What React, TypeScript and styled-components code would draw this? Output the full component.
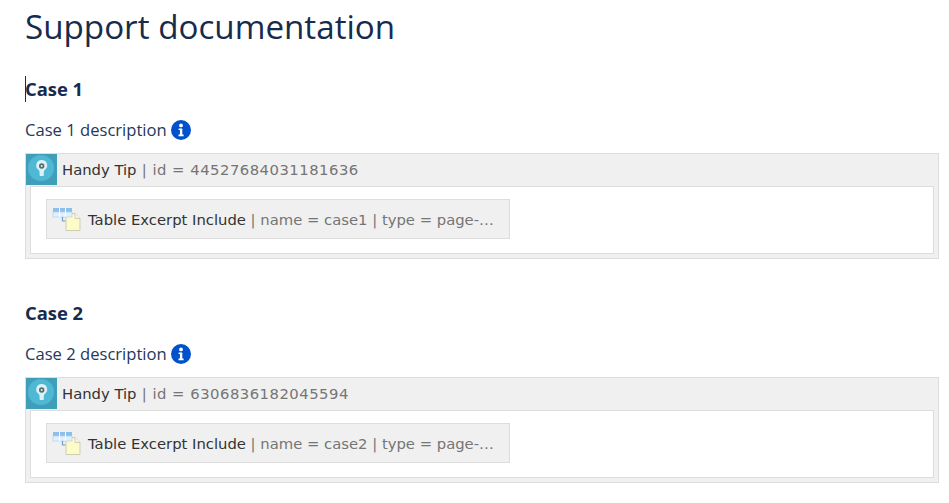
import React from 'react';
import styled, { createGlobalStyle } from 'styled-components';

const GlobalStyle = createGlobalStyle`
  html, body {
    margin: 0;
    background: #ffffff;
    overflow: hidden;
  }
  body {
    color: #172b4d;
    font-family: 'Open Sans', 'Noto Sans', sans-serif;
  }
`;

const Page = styled.div`
  width: 949px;
  height: 503px;
  box-sizing: border-box;
  padding: 6px 10px 0 25px;
  overflow: hidden;
`;

const Title = styled.h1`
  margin: 0;
  height: 42px;
  font-size: 33.2px;
  line-height: 42px;
  font-weight: 400;
  color: #172b4d;
`;

const CaseBlock = styled.section`
  padding-top: 29px;
  height: 195px;
`;

const CaseTitle = styled.h2`
  position: relative;
  margin: 0;
  height: 24px;
  font-size: 18.4px;
  line-height: 24px;
  font-weight: 700;
  color: #172b4d;
`;

const Caret = styled.span`
  position: absolute;
  left: 0;
  top: -1px;
  width: 1px;
  height: 26px;
  background: #172b4d;
`;

const Description = styled.p`
  display: flex;
  align-items: center;
  gap: 4px;
  margin: 17px 0 0;
  height: 24px;
  font-size: 16.6px;
  line-height: 24px;
  color: #253858;
`;

const Macro = styled.div`
  margin-top: 11px;
  box-sizing: border-box;
  height: 106px;
  border: 1px solid #dddddd;
  background: #f0f0f0;
  display: flex;
  flex-direction: column;
  font-family: 'DejaVu Sans', Verdana, sans-serif;
  font-size: 14.8px;
`;

const MacroHeader = styled.div`
  display: flex;
  align-items: flex-start;
  height: 32px;
  flex-shrink: 0;
  gap: 5px;
  white-space: nowrap;
  line-height: 31px;
`;

const MacroBody = styled.div`
  flex: 1;
  margin: 0 4px 4px;
  padding: 12px 15px;
  border: 1px solid #dddddd;
  background: #ffffff;
`;

const Chip = styled.div`
  display: flex;
  align-items: center;
  box-sizing: border-box;
  width: 464px;
  height: 40px;
  padding-left: 5px;
  gap: 6px;
  border: 1px solid #dddddd;
  background: #f0f0f0;
  white-space: nowrap;
  overflow: hidden;
`;

const MacroName = styled.span`
  color: #333333;
`;

const MacroParams = styled.span<{ $spaced?: boolean }>`
  color: #757575;
  letter-spacing: ${props => (props.$spaced ? '0.5px' : '0')};
`;

const InfoIcon = () => (
  <svg width="20" height="20" viewBox="0 0 20 20">
    <circle cx="10" cy="10" r="10" fill="#0052cc" />
    <circle cx="10" cy="5.4" r="1.9" fill="#ffffff" />
    <path d="M7.6 8.4h3.7v6.2h1.3v1.6H7.5v-1.6h1.4V10H7.6z" fill="#ffffff" />
  </svg>
);

const TipIcon = () => (
  <svg width="31" height="31" viewBox="0 0 31 31">
    <rect width="31" height="31" fill="#3f9fba" />
    <circle cx="15" cy="14" r="13" fill="#4fb8d4" />
    <path
      d="M15.7 6a5.4 5.4 0 0 0-3.2 9.8c.6.5.9 1.2 1 2l.2 4.2h4l.2-4.2c.1-.8.4-1.5 1-2A5.4 5.4 0 0 0 15.7 6z"
      fill="#dcf0f5"
    />
    <circle cx="15.7" cy="12" r="2.7" fill="#5a6a72" />
    <circle cx="15.7" cy="12" r="1" fill="#dcf0f5" />
  </svg>
);

const ExcerptIcon = () => (
  <svg width="30" height="27" viewBox="0 0 30 27">
    <path d="M14 7.5h9l5 5v12H14z" fill="#fdfbc8" stroke="#cfcdb0" />
    <path d="M23 7.5v5h5" fill="#f5f5f5" stroke="#cfcdb0" />
    <rect x="1" y="2" width="19" height="4" fill="#8cc0ea" />
    <rect x="1" y="6" width="19" height="5" fill="#e3f0fb" stroke="#a5cdee" strokeWidth="0.6" />
    <path d="M7.5 2v9M13.5 2v9" stroke="#ffffff" strokeWidth="1" />
    <path d="M10.5 11v4h3" fill="none" stroke="#6d9fd0" strokeWidth="1.2" />
  </svg>
);

const cases = [
  { title: 'Case 1', description: 'Case 1 description', id: '44527684031181636', name: 'case1' },
  { title: 'Case 2', description: 'Case 2 description', id: '6306836182045594', name: 'case2' },
];

const App = () => (
  <Page>
    <GlobalStyle />
    <Title>Support documentation</Title>
    {cases.map((item, index) => (
      <CaseBlock key={item.title}>
        <CaseTitle>
          {index === 0 && <Caret />}
          {item.title}
        </CaseTitle>
        <Description>
          {item.description}
          <InfoIcon />
        </Description>
        <Macro>
          <MacroHeader>
            <TipIcon />
            <span>
              <MacroName>Handy Tip</MacroName>
              <MacroParams $spaced> | id = {item.id}</MacroParams>
            </span>
          </MacroHeader>
          <MacroBody>
            <Chip>
              <ExcerptIcon />
              <span>
                <MacroName>Table Excerpt Include</MacroName>
                <MacroParams> | name = {item.name} | type = page-…</MacroParams>
              </span>
            </Chip>
          </MacroBody>
        </Macro>
      </CaseBlock>
    ))}
  </Page>
);

export default App;
